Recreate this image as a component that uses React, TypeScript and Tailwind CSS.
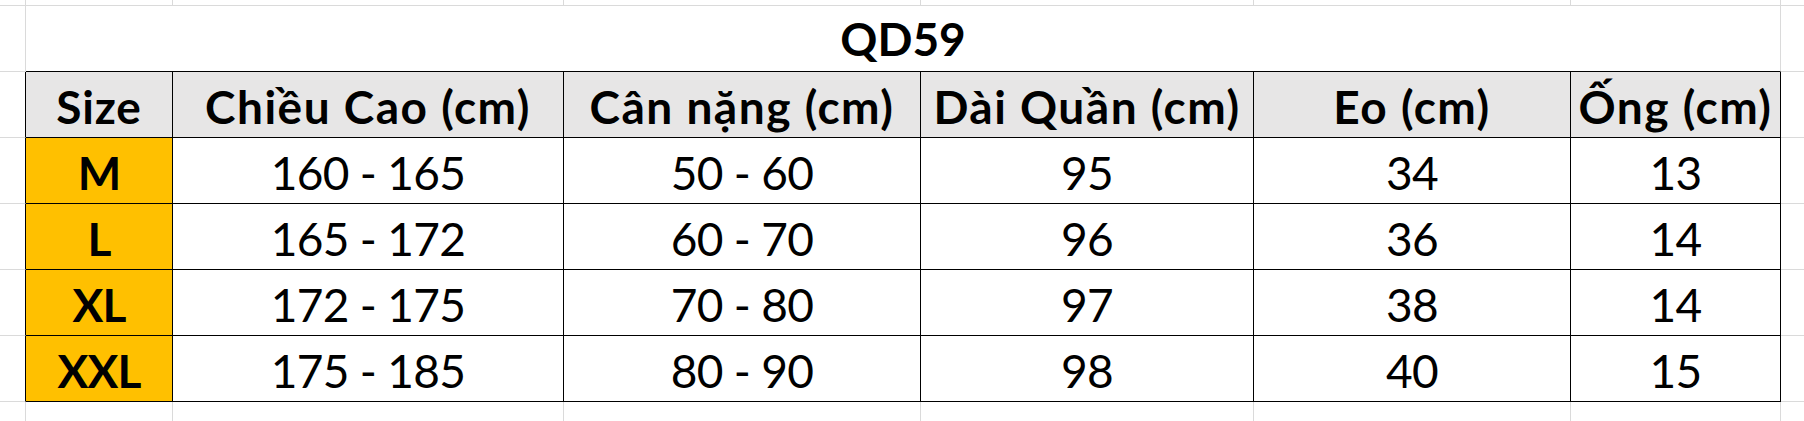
import React from "react";

const G = "border-[#dadada]";

const headers = ["Size", "Chiều Cao (cm)", "Cân nặng (cm)", "Dài Quần (cm)", "Eo (cm)", "Ống (cm)"];
const rows = [
  ["M", "160 - 165", "50 - 60", "95", "34", "13"],
  ["L", "165 - 172", "60 - 70", "96", "36", "14"],
  ["XL", "172 - 175", "70 - 80", "97", "38", "14"],
  ["XXL", "175 - 185", "80 - 90", "98", "40", "15"],
];

export default function App() {
  const cells: React.ReactNode[] = [];
  // row 0 (top strip)
  for (let c = 0; c < 8; c++) {
    cells.push(
      <div key={`r0-${c}`} className={`border-b ${G} ${c < 7 ? "border-r" : ""}`} />
    );
  }
  // row 1: title
  cells.push(<div key="r1-0" className={`border-b border-r ${G}`} />);
  cells.push(
    <div
      key="r1-title"
      className={`col-span-6 border-b border-b-black border-r ${G} flex items-center justify-center bg-white`}
    >
      <span className="font-bold text-[46px] leading-none text-black">QD59</span>
    </div>
  );
  cells.push(<div key="r1-7" className={`border-b ${G}`} />);
  // row 2: header
  cells.push(<div key="r2-0" className={`border-b ${G} border-r border-r-black`} />);
  headers.forEach((h, i) => {
    cells.push(
      <div
        key={`h-${i}`}
        className="border-b border-r border-black bg-[#e7e6e6] flex items-center justify-center pt-[4px]"
      >
        <span
          className={`font-bold text-[46px] leading-none text-black whitespace-nowrap ${
            i === 0 ? "tracking-[0.8px]" : "tracking-[1.5px]"
          }`}
        >
          {h}
        </span>
      </div>
    );
  });
  cells.push(<div key="r2-7" className={`border-b ${G}`} />);
  // data rows
  rows.forEach((r, ri) => {
    cells.push(<div key={`d${ri}-0`} className={`border-b ${G} border-r border-r-black`} />);
    r.forEach((v, ci) => {
      cells.push(
        <div
          key={`d${ri}-${ci + 1}`}
          className={`border-b border-r border-black flex items-center justify-center pt-[4px] ${
            ci === 0 ? "bg-[#ffc000]" : "bg-white"
          }`}
        >
          <span
            className={`${
              ci === 0 ? "font-bold tracking-[-0.8px]" : "font-normal tracking-[-0.7px]"
            } text-[46px] leading-none text-black whitespace-nowrap`}
          >
            {v}
          </span>
        </div>
      );
    });
    cells.push(<div key={`d${ri}-7`} className={`border-b ${G}`} />);
  });
  // bottom row
  for (let c = 0; c < 8; c++) {
    cells.push(<div key={`rb-${c}`} className={`${c < 7 ? `border-r ${G}` : ""}`} />);
  }

  return (
    <div
      className="w-[1804px] h-[421px] overflow-hidden bg-white grid grid-cols-[26px_147px_391px_357px_333px_317px_210px_1fr] grid-rows-[6px_66px_66px_66px_66px_66px_66px_1fr]"
      style={{ fontFamily: "Lato, 'Noto Sans', sans-serif" }}
    >
      {cells}
    </div>
  );
}
